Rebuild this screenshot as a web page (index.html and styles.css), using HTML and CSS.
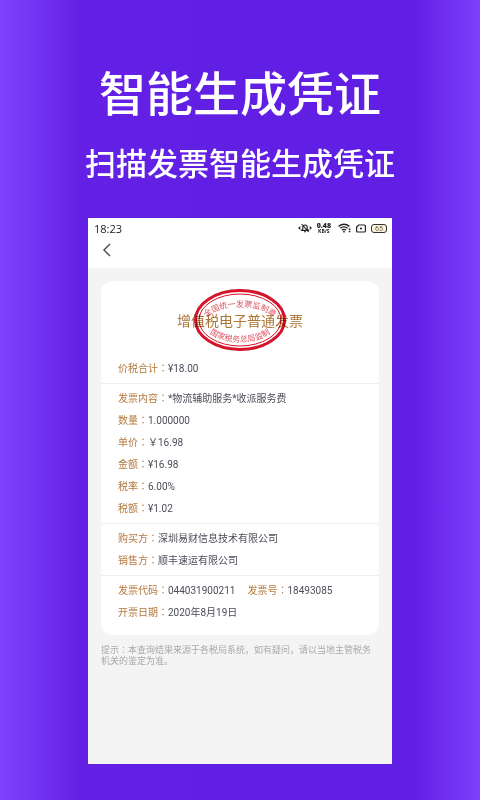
FILE: index.html
```html
<!DOCTYPE html>
<html lang="zh-CN">
<head>
    <meta charset="UTF-8">
    <meta name="viewport" content="width=device-width, initial-scale=1.0">
    <title>智能生成凭证</title>
    <link rel="stylesheet" href="styles.css">
</head>
<body>

    <header class="promo">
        <h1 class="promo-title">智能生成凭证</h1>
        <p class="promo-subtitle">扫描发票智能生成凭证</p>
    </header>

    <main class="phone">
        <!-- 状态栏 -->
        <div class="status-bar">
            <span class="clock">18:23</span>
            <div class="status-icons">
                <svg width="14" height="10" viewBox="0 0 14 10" fill="none" stroke="#222" stroke-width="1.1">
                    <path d="M3.6 7.4h6.8L9.2 5.8V4.2a2.2 2.2 0 0 0-4.4 0v1.6zM6 8.8h2M3.6 1l7 7.8"/>
                    <path d="M2.4 3.6L.8 5l1.6 1.4M11.6 3.6L13.2 5l-1.6 1.4"/>
                </svg>
                <span class="speed"><b>0.48</b><small>KB/S</small></span>
                <svg class="wifi" width="13" height="10" viewBox="0 0 13 10" fill="none" stroke="#222" stroke-width="1.4">
                    <path d="M.6 3.4Q6 -1 11.4 3.4M2.3 5.3Q6 2.4 9.7 5.3M4 7.1Q6 5.7 8 7.1"/>
                    <circle cx="6" cy="8.7" r=".9" fill="#222" stroke="none"/>
                    <path d="M11.6 5.6v1.5M11.6 7.8v1.5" stroke-width="1.6"/>
                </svg>
                <svg width="10" height="9" viewBox="0 0 10 9" fill="none" stroke="#222" stroke-width="1.2">
                    <path d="M2.6 1h5.8q1 0 1 1v5q0 1-1 1H1.6q-1 0-1-1V3z"/>
                    <circle cx="5" cy="4.5" r="1.1" fill="#222" stroke="none"/>
                </svg>
                <span class="battery">65</span>
            </div>
        </div>

        <nav class="nav-bar">
            <button class="back-button" type="button" aria-label="返回">
                <svg width="10" height="14" viewBox="0 0 10 14" fill="none" stroke="#55555c" stroke-width="1.5">
                    <path d="M8 1L2 7l6 6"/>
                </svg>
            </button>
        </nav>

        <!-- 发票内容 -->
        <div class="content">
            <article class="invoice">
                <div class="invoice-head">
                    <h2 class="invoice-title">增值税电子普通发票</h2>
                    <svg class="stamp" width="92" height="62" viewBox="0 0 92 62">
                        <defs>
                            <path id="arc-top" d="M10 32C20 13 72 13 82 32"/>
                            <path id="arc-bottom" d="M12 41C26 57 66 57 80 41"/>
                        </defs>
                        <ellipse cx="46" cy="31" rx="44.5" ry="29.5" fill="none" stroke="#d4142a" stroke-width="3"/>
                        <ellipse cx="46" cy="31" rx="41" ry="26" fill="none" stroke="#d4142a" stroke-width="1"/>
                        <text class="stamp-text"><textPath href="#arc-top" startOffset="50%">全国统一发票监制章</textPath></text>
                        <text class="stamp-text"><textPath href="#arc-bottom" startOffset="50%">国家税务总局监制</textPath></text>
                    </svg>
                </div>

                <dl class="section">
                    <div class="row"><dt>价税合计<span class="colon" lang="zh-Hant">：</span></dt><dd>¥18.00</dd></div>
                </dl>
                <dl class="section">
                    <div class="row"><dt>发票内容<span class="colon" lang="zh-Hant">：</span></dt><dd>*物流辅助服务*收派服务费</dd></div>
                    <div class="row"><dt>数量<span class="colon" lang="zh-Hant">：</span></dt><dd>1.000000</dd></div>
                    <div class="row"><dt>单价<span class="colon" lang="zh-Hant">：</span></dt><dd>￥16.98</dd></div>
                    <div class="row"><dt>金额<span class="colon" lang="zh-Hant">：</span></dt><dd>¥16.98</dd></div>
                    <div class="row"><dt>税率<span class="colon" lang="zh-Hant">：</span></dt><dd>6.00%</dd></div>
                    <div class="row"><dt>税额<span class="colon" lang="zh-Hant">：</span></dt><dd>¥1.02</dd></div>
                </dl>
                <dl class="section">
                    <div class="row"><dt>购买方<span class="colon" lang="zh-Hant">：</span></dt><dd>深圳易财信息技术有限公司</dd></div>
                    <div class="row"><dt>销售方<span class="colon" lang="zh-Hant">：</span></dt><dd>顺丰速运有限公司</dd></div>
                </dl>
                <dl class="section">
                    <div class="row">
                        <dt>发票代码<span class="colon" lang="zh-Hant">：</span></dt><dd class="code">044031900211</dd>
                        <dt>发票号<span class="colon" lang="zh-Hant">：</span></dt><dd>18493085</dd>
                    </div>
                    <div class="row"><dt>开票日期<span class="colon" lang="zh-Hant">：</span></dt><dd>2020年8月19日</dd></div>
                </dl>
            </article>

            <p class="hint">提示<span class="colon" lang="zh-Hant">：</span>本查询结果来源于各税局系统，如有疑问，请以当地主管税务机关的鉴定为准。</p>
        </div>
    </main>

</body>
</html>
```
FILE: styles.css
```css
/* 通用样式 */
* {
    box-sizing: border-box;
    margin: 0;
    padding: 0;
}

body {
    display: flex;
    flex-direction: column;
    min-height: 100vh;
    padding: 66px 88px 36px;
    font-family: Roboto, "Noto Sans CJK SC", sans-serif;
    background: linear-gradient(90deg, #8041fd 0%, #7434f3 7%, #6421e5 16%, #611fe4 50%, #611ee4 86%, #7131f2 94%, #7e3ffc 100%);
}

/* 标题 */
.promo {
    display: flex;
    flex-direction: column;
    align-items: center;
    gap: 20px;
    padding-bottom: 32px;
    color: #fff;
    white-space: nowrap;
}

.promo-title {
    font-size: 47px;
    font-weight: 500;
    line-height: 58px;
}

.promo-subtitle {
    font-size: 31px;
    font-weight: 500;
    line-height: 42px;
}

/* 手机画面 */
.phone {
    flex: 1;
    background: #f4f4f5;
}

.status-bar {
    display: flex;
    align-items: center;
    justify-content: space-between;
    height: 20px;
    padding: 0 5px 0 6px;
    background: #fff;
    color: #222;
}

.clock {
    font-family: "Open Sans", sans-serif;
    font-size: 11px;
}

.status-icons {
    display: flex;
    align-items: center;
    gap: 5px;
}

.speed {
    display: flex;
    flex-direction: column;
    align-items: center;
    font-family: "Open Sans", sans-serif;
    font-weight: 700;
}

.speed b {
    font-size: 7px;
    line-height: 7px;
}

.speed small {
    font-size: 5px;
    line-height: 5px;
}

.wifi {
    margin-left: 2px;
}

.battery {
    width: 16px;
    height: 9px;
    border: 1px solid #333;
    border-radius: 3px;
    background: #fbf3df;
    color: #6b5a3a;
    font-size: 7px;
    line-height: 8px;
    text-align: center;
}

.nav-bar {
    height: 30px;
    padding-left: 9px;
    background: #fff;
}

.back-button {
    display: flex;
    align-items: center;
    justify-content: center;
    width: 20px;
    height: 24px;
    border: none;
    background: none;
    cursor: pointer;
}

.content {
    padding: 13px 13px 0;
}

/* 发票卡片 */
.invoice {
    padding-bottom: 8px;
    background: #fff;
    border-radius: 12px;
}

.invoice-head {
    position: relative;
    padding: 30px 0 27px;
    text-align: center;
}

.invoice-title {
    color: #ae7636;
    font-size: 14px;
    font-weight: 400;
    line-height: 20px;
}

/* 印章盖在标题上 */
.stamp {
    position: absolute;
    top: 8px;
    left: 50%;
    margin-left: -46px;
    mix-blend-mode: multiply;
}

.stamp-text {
    fill: #dc5260;
    font-size: 8px;
    text-anchor: middle;
}

.section {
    padding: 4px 17px 3px;
    font-size: 10px;
    line-height: 22px;
}

.invoice-head + .section {
    padding-top: 0;
}

.section + .section {
    border-top: 1px solid #f0f0f0;
}

.row {
    display: flex;
    height: 22px;
    white-space: nowrap;
}

.row dt {
    color: #b47a3e;
}

.row dd {
    color: #4c4c58;
}

.row .code {
    margin-right: 12px;
}

/* 冒号居中显示 */
.colon {
    font-family: "Noto Sans CJK TC", sans-serif;
    line-height: 1;
}

.hint {
    padding-top: 10px;
    color: #a9a9a9;
    font-size: 9px;
    line-height: 11px;
}
```
